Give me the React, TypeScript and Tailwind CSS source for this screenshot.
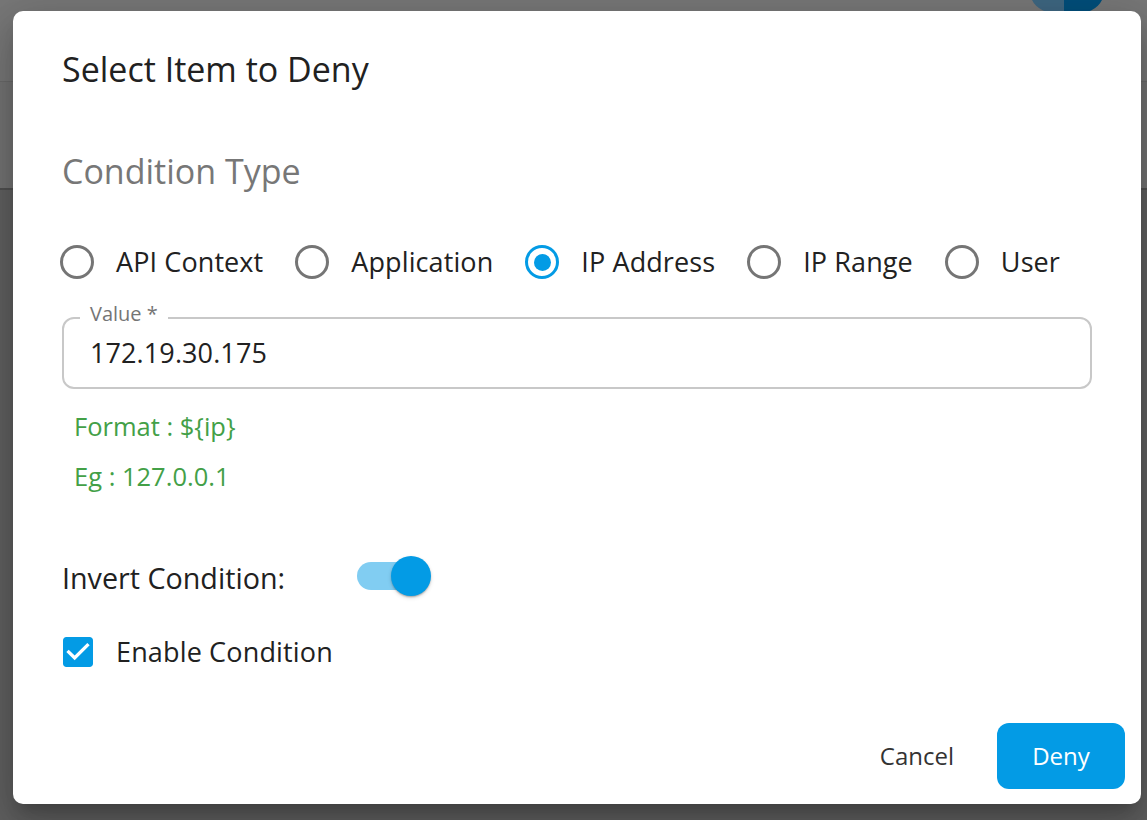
const conditionTypes = ['API Context', 'Application', 'IP Address', 'IP Range', 'User']

function Radio({ label, checked }: { label: string; checked?: boolean }) {
  return (
    <label className="flex items-center gap-[22px]">
      <span
        className={
          checked
            ? 'flex h-[34px] w-[34px] items-center justify-center rounded-full border-[3px] border-[#039be5]'
            : 'flex h-[34px] w-[34px] items-center justify-center rounded-full border-[3px] border-[#757575]'
        }
      >
        {checked && <span className="h-[17px] w-[17px] rounded-full bg-[#039be5]" />}
      </span>
      <span className="text-[27px] leading-[34px] tracking-[0.1px] text-[#212121]">{label}</span>
    </label>
  )
}

export default function App() {
  return (
    <div className="relative h-[820px] w-[1147px] overflow-hidden bg-[#606060] font-['Open_Sans',sans-serif]">
      {/* page behind the backdrop */}
      <div className="flex h-[81px] justify-end bg-[#777777] pr-[43px]">
        <div className="mt-[-30px] flex h-[42px]">
          <div className="w-[34px] rounded-l-full bg-[#3e6680]" />
          <div className="w-[40px] rounded-r-full bg-[#004e7a]" />
        </div>
      </div>
      <div className="h-px bg-[#6a6a6a]" />
      <div className="h-[106px] bg-[#737373]" />
      <div className="h-[2px] bg-[#505050]" />

      {/* dialog */}
      <div className="absolute left-[13px] top-[11px] flex h-[793px] w-[1128px] flex-col rounded-[10px] bg-white pb-[15px] pl-[49px] pr-[16px] pt-[38px] shadow-[0_11px_15px_-7px_rgba(0,0,0,0.2),0_24px_38px_3px_rgba(0,0,0,0.14),0_9px_46px_8px_rgba(0,0,0,0.12)]">
        <h2 className="text-[34px] leading-[40px] text-[#212121]">Select Item to Deny</h2>

        <h3 className="mt-[62px] text-[34px] leading-[40px] text-[#777777]">Condition Type</h3>

        <div className="ml-[-2px] mt-[54px] flex h-[34px] items-center gap-[32px]">
          {conditionTypes.map((t) => (
            <Radio key={t} label={t} checked={t === 'IP Address'} />
          ))}
        </div>

        <div className="relative mt-[38px] flex h-[72px] w-[1030px] items-center rounded-[12px] border-2 border-[#c8c8c8] pl-[26px]">
          <span className="absolute left-[16px] top-[-15px] bg-white px-[10px] text-[20px] leading-[20px] text-[#757575]">
            Value *
          </span>
          <span className="text-[27px] leading-[34px] tracking-[0.1px] text-[#212121]">172.19.30.175</span>
        </div>

        <p className="ml-[12px] mt-[22px] text-[25.5px] leading-[30px] text-[#43a047]">Format : ${'{ip}'}</p>
        <p className="ml-[12px] mt-[20px] text-[25.5px] leading-[30px] text-[#43a047]">Eg : 127.0.0.1</p>

        <div className="mt-[65px] flex h-[40px] items-start">
          <span className="mt-[5px] w-[295px] text-[28.7px] leading-[34px] text-[#212121]">Invert Condition:</span>
          <div className="relative h-[40px] w-[74px]">
            <div className="mt-[6px] h-[28px] w-[58px] rounded-full bg-[#81cdf2]" />
            <div className="absolute right-0 top-0 h-[40px] w-[40px] rounded-full bg-[#039be5] shadow-[0_2px_2px_-1px_rgba(0,0,0,0.2),0_1px_2px_0_rgba(0,0,0,0.14),0_2px_4px_0_rgba(0,0,0,0.12)]" />
          </div>
        </div>

        <label className="mt-[39px] flex h-[34px] items-center gap-[23px]">
          <svg viewBox="3 3 18 18" className="ml-[1px] h-[30px] w-[30px]">
            <path
              fill="#039be5"
              d="M19 3H5c-1.11 0-2 .9-2 2v14c0 1.1.89 2 2 2h14c1.11 0 2-.9 2-2V5c0-1.1-.89-2-2-2z"
            />
            <path fill="#ffffff" d="M10 17l-5-5 1.41-1.41L10 14.17l7.59-7.59L19 8l-9 9z" />
          </svg>
          <span className="text-[27px] leading-[34px] tracking-[0.15px] text-[#212121]">Enable Condition</span>
        </label>

        <div className="mt-auto flex items-center justify-end gap-[7px]">
          <button className="h-[66px] px-[36px] text-[24px] text-[#333333]">Cancel</button>
          <button className="h-[66px] w-[128px] rounded-[12px] bg-[#039be5] text-[24px] text-white">Deny</button>
        </div>
      </div>
    </div>
  )
}
